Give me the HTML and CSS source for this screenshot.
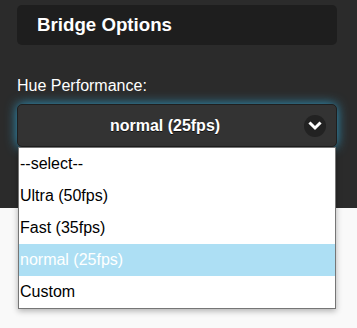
FILE: index.html
```html
<!DOCTYPE html>
<html lang="en">
<head>
    <meta charset="UTF-8">
    <meta name="viewport" content="width=device-width, initial-scale=1.0">
    <title>Bridge Options</title>
    <link rel="stylesheet" href="styles.css">
</head>
<body>

<div class="page">
    <div class="header">
        <h2>Bridge Options</h2>
    </div>

    <label class="field-label" for="huePerf">Hue Performance:</label>
    <div class="select-wrap">
        <div class="select-btn" id="huePerf">
            <span>normal (25fps)</span>
            <span class="arrow">
                <svg width="14" height="14" viewBox="0 0 14 14">
                    <polyline points="2.5,4.5 7,9 11.5,4.5" fill="none" stroke="#fff" stroke-width="3" stroke-linecap="square"/>
                </svg>
            </span>
        </div>
        <ul class="listbox">
            <li>--select--</li>
            <li>Ultra (50fps)</li>
            <li>Fast (35fps)</li>
            <li class="selected">normal (25fps)</li>
            <li>Custom</li>
        </ul>
    </div>
</div>

</body>
</html>
```

FILE: styles.css
```css
html, body {
    height: 100%;
}
body {
    margin: 0;
    min-height: 328px;
    background-color: #f9f9f9;
    font-family: 'Liberation Sans', Arial, sans-serif;
}
.page {
    background-color: #2b2b2b;
    height: 208px;
    padding: 5px 20px 0 17px;
    box-sizing: border-box;
}
.header {
    background-color: #1e1e1e;
    border-radius: 5px;
    height: 40px;
    padding-left: 20px;
}
.header h2 {
    margin: 0;
    color: #fff;
    font-size: 18.7px;
    line-height: 39px;
    font-weight: bold;
}
.field-label {
    display: block;
    margin-top: 31px;
    color: #fff;
    font-size: 16px;
    line-height: 20px;
}
.select-wrap {
    position: relative;
    z-index: 2;
    margin-top: 8px;
}
.select-btn {
    position: relative;
    height: 43px;
    box-sizing: border-box;
    padding: 0 40px 0 16px;
    background-color: #333;
    border: 1px solid #1f1f1f;
    border-radius: 5px;
    box-shadow: 0 0 12px #2f9ac4;
    color: #fff;
    font-size: 16px;
    font-weight: bold;
    line-height: 41px;
    text-align: center;
    text-shadow: 0 1px 0 #111;
}
.arrow {
    position: absolute;
    right: 10px;
    top: 10px;
    width: 22px;
    height: 22px;
    border-radius: 50%;
    background-color: #222;
    display: flex;
    align-items: center;
    justify-content: center;
}
.listbox {
    position: absolute;
    top: 43px;
    left: 1px;
    right: 1px;
    margin: 0;
    padding: 0;
    list-style: none;
    background-color: #fff;
    border: 1px solid #767676;
    box-shadow: 0 2px 6px rgba(0, 0, 0, 0.3);
}
.listbox li {
    height: 32px;
    line-height: 32px;
    padding-left: 1px;
    font-size: 16px;
    color: #000;
}
.listbox li.selected {
    background-color: #addff4;
    color: #fff;
}
```
